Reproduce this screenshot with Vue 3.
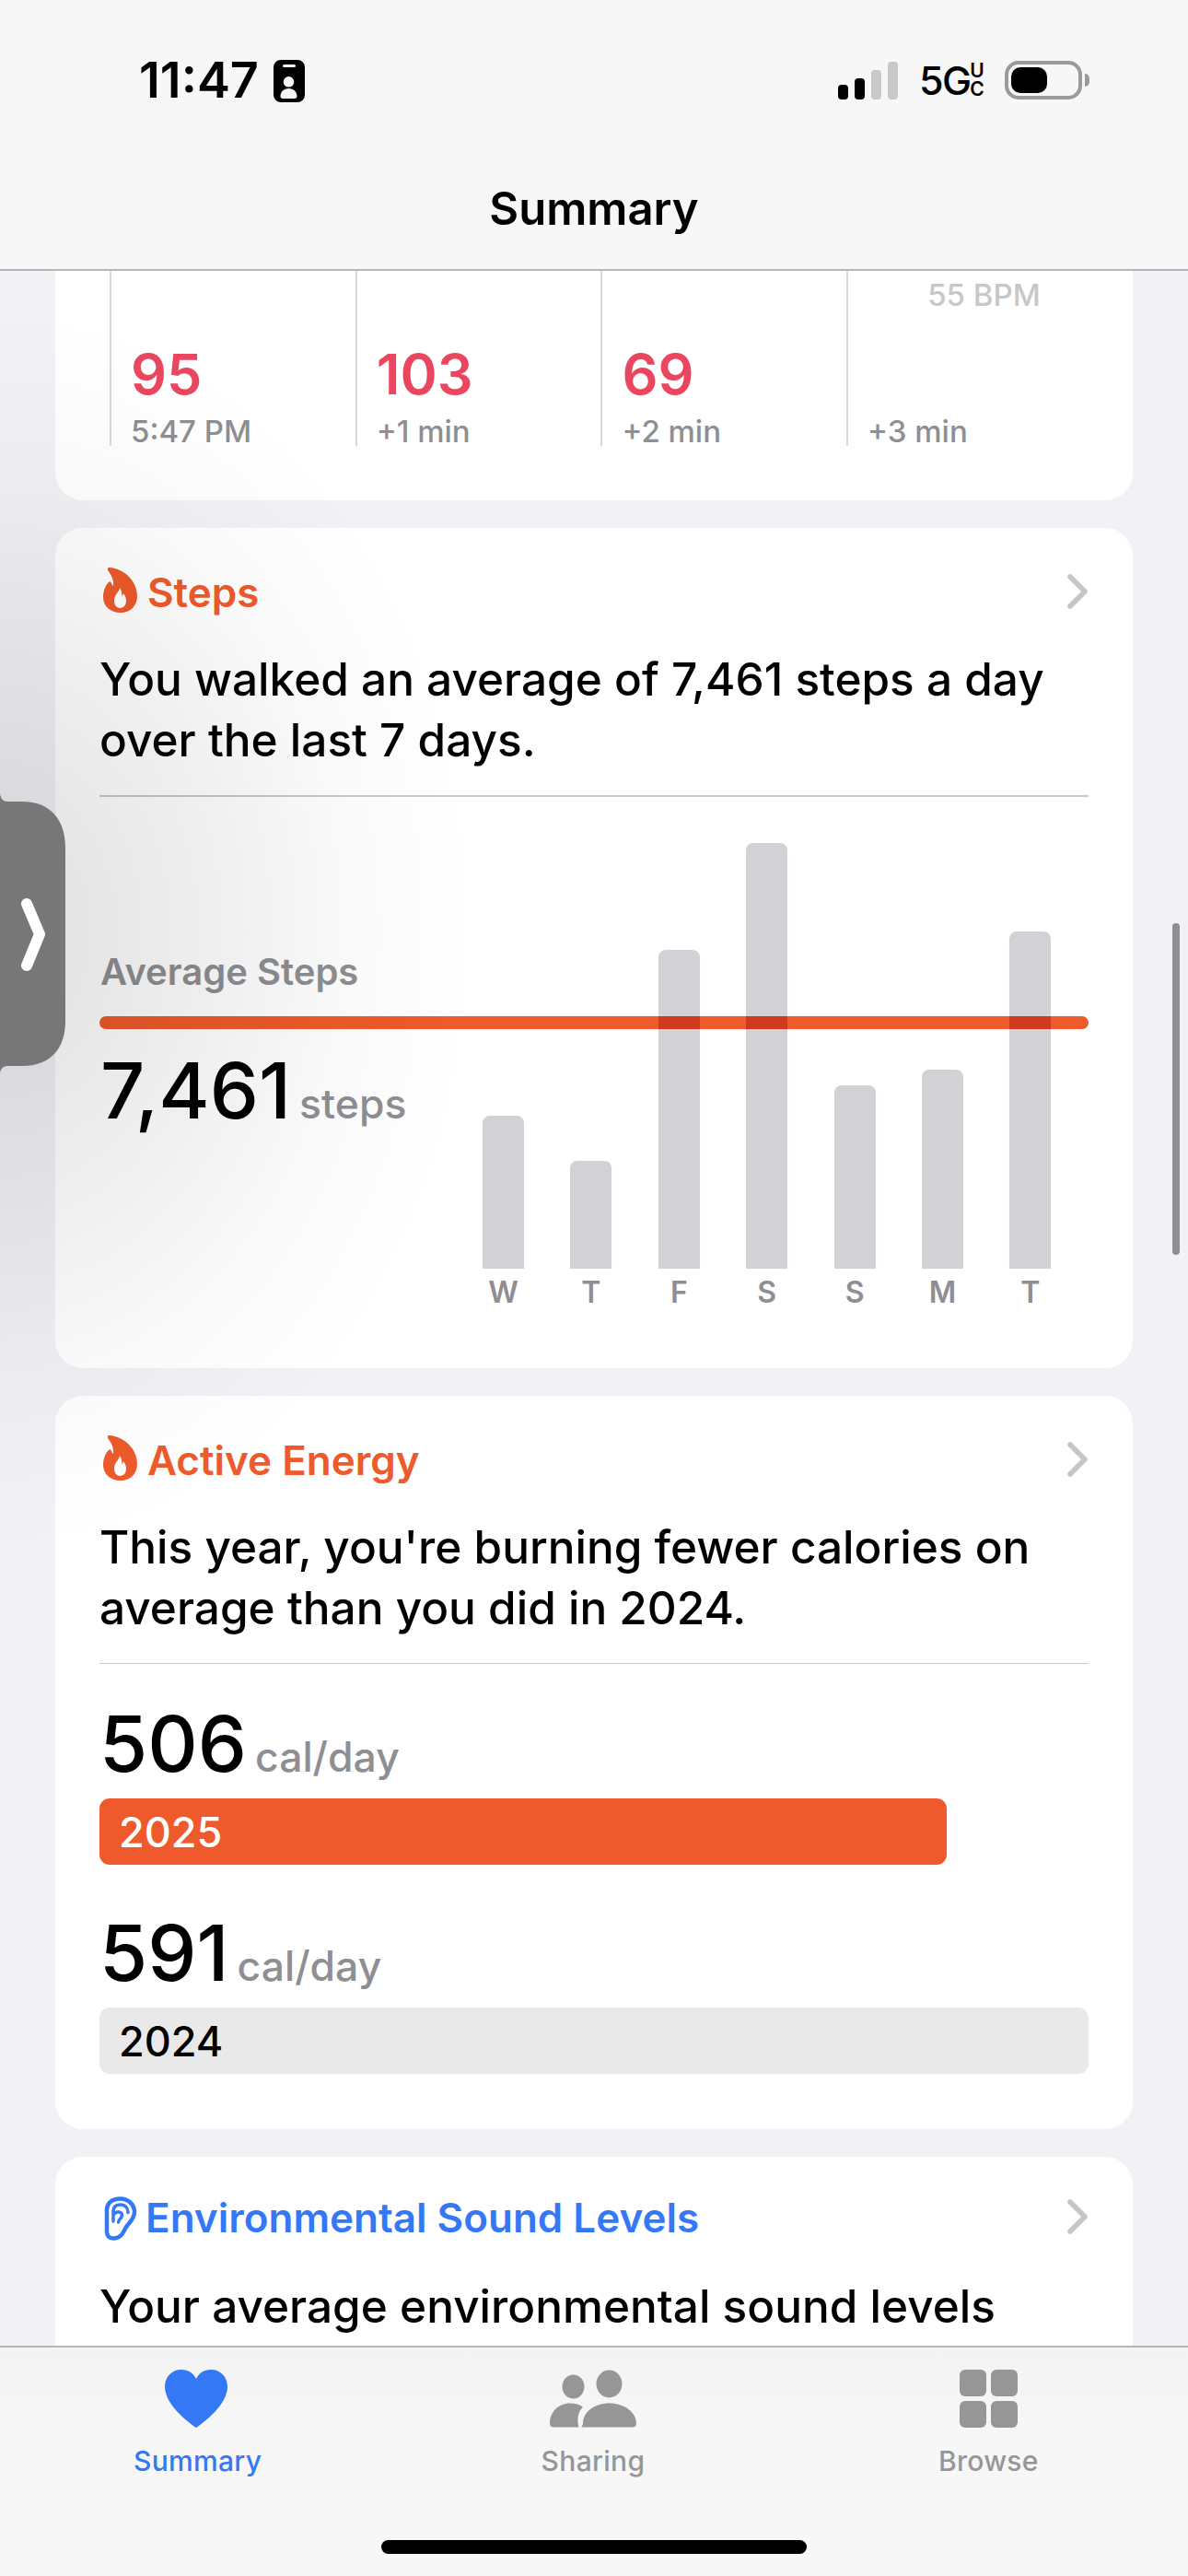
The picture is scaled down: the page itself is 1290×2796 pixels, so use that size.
<script setup>
const samples = [
  { value: '95', time: '5:47 PM' },
  { value: '103', time: '+1 min' },
  { value: '69', time: '+2 min' },
  { value: '', time: '+3 min', top: '55 BPM' },
]
const bars = [
  { day: 'W', h: 166 },
  { day: 'T', h: 116.5 },
  { day: 'F', h: 345.5 },
  { day: 'S', h: 461.5 },
  { day: 'S', h: 198.5 },
  { day: 'M', h: 215.5 },
  { day: 'T', h: 365.5 },
]
const years = [
  { value: 506, year: '2025', cls: 'now' },
  { value: 591, year: '2024', cls: 'past' },
]
const maxYear = 591
</script>

<template>
  <div class="phone">
    <header class="nav">
      <div class="status">
        <span class="time">11:47</span>
        <svg class="idcard" viewBox="0 0 34 46" width="34" height="46">
          <path fill-rule="evenodd" d="M8 0H26A8 8 0 0 1 34 8V38A8 8 0 0 1 26 46H8A8 8 0 0 1 0 38V8A8 8 0 0 1 8 0ZM11.500 5A1.500 1.500 0 0 0 11.500 8H22.500A1.500 1.500 0 0 0 22.500 5ZM16.500 18A5.800 5.800 0 1 0 16.500 29.600A5.800 5.800 0 1 0 16.500 18ZM16.500 31C11 31 7.500 35 7.500 39.500C7.500 41 8.500 42 10 42H23C24.500 42 25.500 41 25.500 39.500C25.500 35 22 31 16.500 31Z" fill="#000"/>
        </svg>
        <div class="status-right">
          <div class="signal">
            <i class="s1"></i><i class="s2"></i><i class="s3"></i><i class="s4"></i>
          </div>
          <div class="net">
            <span class="fiveg">5G</span>
            <span class="uc"><b>U</b><b>C</b></span>
          </div>
          <div class="battery"><div class="battery-fill"></div></div>
          <div class="battery-cap"></div>
        </div>
      </div>
      <h1 class="nav-title">Summary</h1>
    </header>

    <main class="scroll">
      <section class="card card-first">
        <div class="samples">
          <div v-for="s in samples" :key="s.time" class="sample">
            <div class="sample-top">{{ s.top }}</div>
            <div class="sample-value">{{ s.value }}</div>
            <div class="sample-time">{{ s.time }}</div>
          </div>
        </div>
      </section>

      <section class="card">
        <div class="head orange">
          <svg class="flame" viewBox="0 0 38 50" width="38" height="50">
            <path fill-rule="evenodd" d="M5 1C5 0 6 0 7 0C22 1 37 14 37 31C37 42 29 49 19 49C8 49 0 42 0 32C0 26 2 20 6 16C7 15 8 15 9 17C9 18 10 19 11 20C12 14 9 8 5 3C5 2 5 2 5 1ZM18 22C18 26 12 29 12 36C12 41 15 44 18.500 44C22 44 25 41 25 36C25 33 24 31 22 28C21.500 30 21 31 20.500 31.500C20.500 28 20 25 18 22Z" fill="#ee5a2b"/>
          </svg>
          <span class="head-title">Steps</span>
          <svg class="chev" viewBox="0 0 24 38" width="24" height="38"><path d="M4 3L20 19L4 35" fill="none" stroke="#c5c5c7" stroke-width="5.500" stroke-linecap="round" stroke-linejoin="round"/></svg>
        </div>
        <p class="desc">You walked an average of 7,461 steps a day<br>over the last 7 days.</p>
        <div class="rule"></div>
        <div class="chart">
          <div class="chart-left">
            <div class="avg-label">Average Steps</div>
            <div class="figure avg-figure"><span class="big">7,461</span><span class="unit">steps</span></div>
          </div>
          <div class="bars">
            <div v-for="(b, i) in bars" :key="i" class="bar-col">
              <div class="bar" :style="{ height: b.h + 'px' }"><div class="bar-hit"></div></div>
              <div class="bar-day">{{ b.day }}</div>
            </div>
          </div>
          <div class="avg-line"></div>
        </div>
      </section>

      <section class="card card-energy">
        <div class="head orange">
          <svg class="flame" viewBox="0 0 38 50" width="38" height="50">
            <path fill-rule="evenodd" d="M5 1C5 0 6 0 7 0C22 1 37 14 37 31C37 42 29 49 19 49C8 49 0 42 0 32C0 26 2 20 6 16C7 15 8 15 9 17C9 18 10 19 11 20C12 14 9 8 5 3C5 2 5 2 5 1ZM18 22C18 26 12 29 12 36C12 41 15 44 18.500 44C22 44 25 41 25 36C25 33 24 31 22 28C21.500 30 21 31 20.500 31.500C20.500 28 20 25 18 22Z" fill="#ee5a2b"/>
          </svg>
          <span class="head-title">Active Energy</span>
          <svg class="chev" viewBox="0 0 24 38" width="24" height="38"><path d="M4 3L20 19L4 35" fill="none" stroke="#c5c5c7" stroke-width="5.500" stroke-linecap="round" stroke-linejoin="round"/></svg>
        </div>
        <p class="desc">This year, you're burning fewer calories on<br>average than you did in 2024.</p>
        <div class="rule"></div>
        <div v-for="y in years" :key="y.year" class="year">
          <div class="figure"><span class="big">{{ y.value }}</span><span class="unit">cal/day</span></div>
          <div class="year-track">
            <div class="year-bar" :class="y.cls" :style="{ width: (y.value / maxYear) * 100 + '%' }">{{ y.year }}</div>
          </div>
        </div>
      </section>

      <section class="card card-sound">
        <div class="head blue">
          <svg class="ear" viewBox="0 0 36 48" width="36" height="48">
            <path d="M3 15C3 7 9 2.500 17.500 2.500C26.500 2.500 33 9 33 17C33 25 27 28 23.500 34C20 40.500 18 45.500 10 45.500C5.500 45.500 3 42.500 3 38Z" fill="none" stroke="#3478f6" stroke-width="4.500" stroke-linejoin="round"/>
            <path d="M10 27V16C10 11 13 9 18 9C23 9 26 12.500 26 17.500M11 19C14 15.500 19.500 16.500 19.500 20.500C19.500 24 16 24 15.500 28" fill="none" stroke="#3478f6" stroke-width="3.500" stroke-linecap="round"/>
          </svg>
          <span class="head-title">Environmental Sound Levels</span>
          <svg class="chev" viewBox="0 0 24 38" width="24" height="38"><path d="M4 3L20 19L4 35" fill="none" stroke="#c5c5c7" stroke-width="5.500" stroke-linecap="round" stroke-linejoin="round"/></svg>
        </div>
        <p class="desc">Your average environmental sound levels</p>
      </section>
    </main>

    <footer class="tabs">
      <div class="tab active">
        <svg viewBox="0 0 68 63" width="68" height="63" class="tab-icon">
          <path d="M34 63C31 61 0 40 0 18.500C0 7.500 8 0 18 0C25 0 31 3.500 34 10C37 3.500 43 0 50 0C60 0 68 7.500 68 18.500C68 40 37 61 34 63Z" fill="#3478f6"/>
        </svg>
        <span>Summary</span>
      </div>
      <div class="tab">
        <svg viewBox="0 0 94 62" width="94" height="62" class="tab-icon">
          <ellipse cx="25.500" cy="18" rx="12" ry="13" fill="#969696"/>
          <ellipse cx="64.500" cy="15" rx="14" ry="15" fill="#969696"/>
          <path d="M0 58C0 46 9 36 22 36C28 36 32 37.500 36 40C31 45 29 52 31.500 62H4C1.500 62 0 60.500 0 58Z" fill="#969696"/>
          <path d="M36 62C33 62 36 60 36 58C36 46 48 36 64.500 36C81 36 94 46 94 58C94 60.500 92.500 62 90 62Z" fill="#969696"/>
        </svg>
        <span>Sharing</span>
      </div>
      <div class="tab">
        <div class="tab-icon grid-icon"><i></i><i></i><i></i><i></i></div>
        <span>Browse</span>
      </div>
      <div class="home"></div>
    </footer>

    <div class="edge-shade"></div>
    <div class="scrollbar"></div>
    <svg class="handle" viewBox="0 0 72 306" width="72" height="306">
      <path d="M0 0C0 6 3 10 8 10H24C55 10 71 30 71 60V248C71 278 55 297 24 297H8C3 297 0 301 0 306Z" fill="#777"/>
      <path d="M29 121L43 154L29 188" fill="none" stroke="#fff" stroke-width="12" stroke-linecap="round" stroke-linejoin="round"/>
    </svg>
  </div>
</template>

<style>
html, body { margin: 0; padding: 0; background: #f1f1f6; }
</style>

<style scoped>
.phone {
  position: relative;
  width: 1290px;
  height: 2796px;
  overflow: hidden;
  display: flex;
  flex-direction: column;
  background: #f1f1f6;
  font-family: Inter, "Liberation Sans", sans-serif;
  color: #000;
}
.nav {
  flex: none;
  height: 294px;
  box-sizing: border-box;
  background: #f7f7f7;
  border-bottom: 2px solid #b6b6b6;
  position: relative;
  z-index: 2;
}
.status {
  display: flex;
  align-items: center;
  height: 60px;
  padding: 57px 107px 0 151px;
}
.time {
  font-size: 54px;
  line-height: 60px;
  font-weight: 600;
}
.idcard { margin-left: 16px; margin-top: 2px; }
.status-right {
  margin-left: auto;
  display: flex;
  align-items: center;
}
.signal {
  display: flex;
  align-items: flex-end;
  gap: 7px;
  height: 41px;
}
.signal i { display: block; width: 11px; border-radius: 4px; }
.s1 { height: 16px; background: #000; }
.s2 { height: 23px; background: #000; }
.s3 { height: 32px; background: #c8c8c8; }
.s4 { height: 41px; background: #c8c8c8; }
.net {
  display: flex;
  align-items: center;
  margin-left: 23px;
}
.fiveg {
  width: 49px;
  font-size: 43px;
  line-height: 50px;
  font-weight: 500;
  letter-spacing: -1.500px;
  white-space: nowrap;
}
.uc {
  display: flex;
  flex-direction: column;
  width: 16px;
  margin-left: 6px;
  font-size: 21px;
  line-height: 20px;
  text-align: center;
}
.uc b { font-weight: 600; }
.battery {
  width: 84px;
  height: 42px;
  box-sizing: border-box;
  border: 4px solid #9a9a9a;
  border-radius: 15px;
  padding: 3px;
  margin-left: 22px;
}
.battery-fill {
  width: 39px;
  height: 100%;
  background: #000;
  border-radius: 10px;
}
.battery-cap {
  width: 5px;
  height: 14px;
  margin-left: 3px;
  background: #9a9a9a;
  border-radius: 0 7px 7px 0;
}
.nav-title {
  margin: 80px 0 0;
  text-align: center;
  font-size: 49px;
  line-height: 60px;
  font-weight: 600;
}

.scroll {
  flex: 1;
  min-height: 0;
  overflow: hidden;
  padding: 0 60px;
  display: flex;
  flex-direction: column;
  gap: 30px;
}
.card {
  flex: none;
  background: #fff;
  border-radius: 30px;
  padding: 42px 48px 0;
}
.card-first {
  border-radius: 0 0 30px 30px;
  padding: 0 0 59px 59px;
}
.samples { display: flex; }
.sample {
  width: 266.700px;
  height: 190px;
  box-sizing: border-box;
  border-left: 2px solid #d9d9d9;
  padding-left: 21px;
}
.sample-top {
  height: 74px;
  padding: 6px 56px 0 0;
  text-align: right;
  font-size: 33px;
  line-height: 40px;
  font-weight: 500;
  color: #c7c7c9;
}
.sample-value {
  height: 64px;
  font-size: 61px;
  line-height: 64px;
  font-weight: 600;
  color: #ea4660;
}
.sample-time {
  margin-top: 13px;
  font-size: 33px;
  line-height: 34px;
  font-weight: 500;
  color: #8e8e93;
}

.head {
  display: flex;
  align-items: flex-start;
  height: 56px;
}
.orange { color: #ee5a2b; }
.blue { color: #3478f6; }
.flame { flex: none; margin: 1px 0 0 4px; }
.ear { flex: none; margin: 5px 0 0 5px; }
.head-title {
  margin-left: 10px;
  font-size: 44px;
  line-height: 56px;
  font-weight: 600;
}
.card-sound .head-title { margin-left: 9px; }
.chev { flex: none; margin: 8px 0 0 auto; }
.card-sound { padding-top: 38px; height: 400px; box-sizing: border-box; }
.card-sound .desc { margin-top: 35px; }
.desc {
  margin: 33px 0 0;
  font-size: 49.500px;
  line-height: 66px;
  font-weight: 540;
}
.rule {
  height: 1.500px;
  margin-top: 27px;
  background: #c9c9cb;
}
.chart {
  position: relative;
  height: 620px;
  display: flex;
}
.chart-left {
  flex: none;
  width: 416px;
  padding: 167px 0 0 1px;
  box-sizing: border-box;
}
.avg-label {
  font-size: 40px;
  line-height: 46px;
  font-weight: 600;
  color: #8e8e93;
}
.avg-figure { margin-top: 60px; }
.figure {
  display: flex;
  align-items: baseline;
  gap: 9px;
  height: 90px;
  line-height: 90px;
}
.big {
  font-size: 84.500px;
  font-weight: 550;
}
.unit {
  font-size: 44.500px;
  font-weight: 500;
  color: #8e8e93;
}
.bars {
  flex: none;
  display: flex;
  gap: 50.400px;
  position: relative;
  z-index: 1;
  height: 556px;
}
.bar-col {
  width: 45px;
  height: 556px;
  display: flex;
  flex-direction: column;
  justify-content: flex-end;
  align-items: center;
}
.bar {
  position: relative;
  width: 45px;
  background: #d1d1d6;
  border-radius: 8px 8px 0 0;
  overflow: hidden;
}
.bar-hit {
  position: absolute;
  left: 0;
  right: 0;
  bottom: 259.500px;
  height: 14.500px;
  background: #cf3a1e;
}
.bar-day {
  height: 36px;
  margin-top: 8px;
  font-size: 32px;
  line-height: 36px;
  font-weight: 600;
  color: #8e8e93;
}
.avg-line {
  position: absolute;
  left: 0;
  right: 0;
  top: 238px;
  height: 14.500px;
  background: #ee5a2b;
  border-radius: 8px;
}
.card-energy { padding-bottom: 60px; }
.year { margin-top: 41px; }
.year + .year { margin-top: 50px; }
.year-track { margin-top: 15px; }
.year-bar {
  box-sizing: border-box;
  height: 72px;
  padding-left: 21px;
  border-radius: 11px;
  font-size: 45px;
  line-height: 73px;
  font-weight: 500;
}
.year-bar.now { background: #ee5a2b; color: #fff; }
.year-bar.past { background: #e9e9ea; color: #000; }

.tabs {
  flex: none;
  position: relative;
  z-index: 2;
  height: 250px;
  box-sizing: border-box;
  border-top: 2px solid #b6b6b6;
  padding: 24px 2px 0 0;
  background: linear-gradient(#f3f3f3, #f7f7f7 40%);
  display: grid;
  grid-template-columns: repeat(3, 1fr);
  align-items: start;
}
.tab {
  display: flex;
  flex-direction: column;
  align-items: center;
  font-size: 30px;
  line-height: 36px;
  font-weight: 500;
  letter-spacing: 0.300px;
  color: #969696;
}
.tab.active { color: #3478f6; }
.tab.active .tab-icon { margin-left: -3px; }
.tab-icon { display: block; height: 63px; margin-bottom: 18px; }
.grid-icon {
  display: grid;
  grid-template-columns: 29px 29px;
  grid-template-rows: 29px 29px;
  gap: 5px;
}
.grid-icon i { display: block; background: #969696; border-radius: 6px; }
.home {
  position: absolute;
  left: 414px;
  bottom: 24px;
  width: 462px;
  height: 15px;
  border-radius: 8px;
  background: #000;
}
.edge-shade {
  position: absolute;
  left: 0;
  top: 294px;
  width: 700px;
  height: 1440px;
  background: radial-gradient(ellipse 520px 680px at 0 716px, rgba(0,0,0,.12), rgba(0,0,0,.07) 40%, rgba(0,0,0,.025) 72%, rgba(0,0,0,0) 100%);
  pointer-events: none;
  z-index: 1;
}
.scrollbar {
  position: absolute;
  left: 1273px;
  top: 1002px;
  width: 8px;
  height: 360px;
  border-radius: 4px;
  background: #8f8f92;
  z-index: 1;
}
.handle {
  position: absolute;
  left: 0;
  top: 860px;
  z-index: 3;
}
</style>
